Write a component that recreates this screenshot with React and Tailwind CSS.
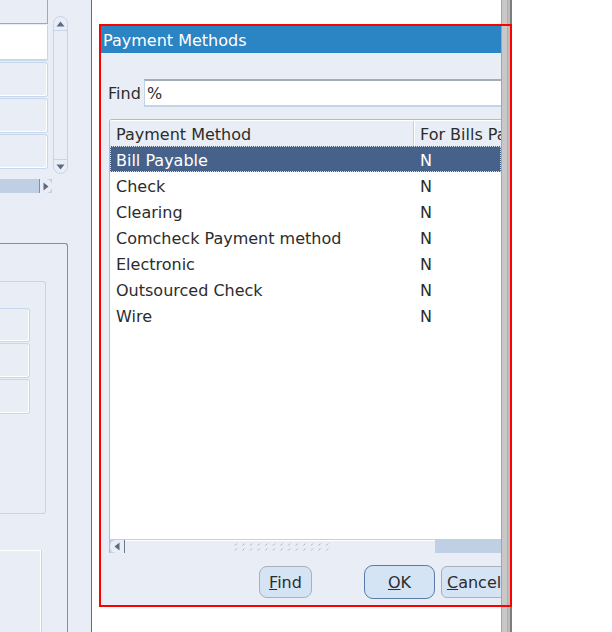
import React from 'react';

const rows = [
  ['Bill Payable', 'N'],
  ['Check', 'N'],
  ['Clearing', 'N'],
  ['Comcheck Payment method', 'N'],
  ['Electronic', 'N'],
  ['Outsourced Check', 'N'],
  ['Wire', 'N'],
];

// small field box used in the background form
const Field = ({ className }) => (
  <div className={`bg-[#e9eef6] border border-l-0 border-[#c8d8ec] rounded-r-[3px] shadow-[inset_-1px_-1px_0_#ffffff] ${className}`} />
);

const LeftPanel = () => (
  <div className="w-[92px] h-full shrink-0 bg-[#e9eef6] border-r border-[#5b6d96] flex flex-col overflow-hidden">
    <div className="flex h-[174px]">
      <div className="w-[48px] flex flex-col">
        <div className="h-[24px] border-b border-r border-[#a8a8a8]" />
        <div className="mt-[1px] h-[36px] bg-white border-r border-b-2 border-[#c8d8ec] rounded-br-[2px]" />
        <Field className="mt-[1px] h-[35px]" />
        <Field className="mt-[1px] h-[35px]" />
        <Field className="mt-[1px] h-[35px]" />
      </div>
      <div className="ml-[5px] mt-[16px] w-[15px] h-[158px] rounded-full border border-[#c4d4ea] flex flex-col">
        <div className="h-[14px] border-b border-[#c4d4ea] flex items-center justify-center">
          <svg width="9" height="6" viewBox="0 0 9 6"><path d="M4.5 0.5 L8.5 5.5 L0.5 5.5 Z" fill="#5e6a80" /></svg>
        </div>
        <div className="flex-1" />
        <div className="h-[14px] border-t border-[#c4d4ea] flex items-center justify-center">
          <svg width="9" height="6" viewBox="0 0 9 6"><path d="M0.5 0.5 L8.5 0.5 L4.5 5.5 Z" fill="#5e6a80" /></svg>
        </div>
      </div>
    </div>
    <div className="mt-[5px] h-[14px] w-[52px] bg-[#c0d0e4] flex justify-end">
      <div className="w-[13px] h-full rounded-r-[6px] bg-[#e9eef6] border-l border-[#8090a8] flex items-center justify-center">
        <svg width="6" height="9" viewBox="0 0 6 9"><path d="M0.5 0.5 L5.5 4.5 L0.5 8.5 Z" fill="#5e6a80" /></svg>
      </div>
    </div>
    <div className="mt-[50px] w-[68px] flex-1 border-t border-r border-[#7890aa] rounded-tr-[3px] flex flex-col">
      <div className="mt-[37px] w-[46px] h-[233px] border border-l-0 border-[#c4d4ea] rounded-r-[3px] flex flex-col">
        <Field className="mt-[26px] w-[30px] h-[34px]" />
        <Field className="mt-[1px] w-[30px] h-[35px]" />
        <Field className="mt-[1px] w-[30px] h-[35px]" />
      </div>
      <div className="mt-[36px] w-[41px] flex-1 border-t border-r border-white shadow-[1px_0_0_#c4d4ea]" />
    </div>
  </div>
);

const GripDots = () => (
  <svg width="100" height="10" viewBox="0 0 100 10">
    {Array.from({ length: 13 }).map((_, i) => (
      <g key={i} stroke="#a8b4c4" strokeWidth="1">
        <path d={`M${i * 7.6 + 1} 3.5 L${i * 7.6 + 3} 1.5`} />
        <path d={`M${i * 7.6 + 1} 8.5 L${i * 7.6 + 3} 6.5`} />
      </g>
    ))}
  </svg>
);

const Dialog = () => (
  <div className="relative z-10 w-[413px] h-[583px] border-2 border-[#ff0000] flex">
    <div className="w-[400px] shrink-0 h-full flex flex-col overflow-hidden">
      <div className="h-[27px] shrink-0 bg-[#2b84c4] text-white pl-[2px] pt-[2px] leading-[25px] text-[16px] whitespace-nowrap">
        Payment Methods
      </div>
      <div className="flex-1 bg-[#e9eef6] flex flex-col">
        <div className="mt-[26px] flex items-center h-[28px]">
          <span className="pl-[7px] w-[43px] shrink-0 text-[16px] text-[#2c2c2c] pt-[2px]">Find</span>
          <div className="flex-1 h-full bg-white border-t-2 border-[#a4acb8] border-b-2 border-b-[#c4d4e6] border-l border-l-[#c4d4e6] pl-[2px] pt-[1px] text-[16px] text-[#2c2c2c] leading-[24px]">
            %
          </div>
        </div>
        <div className="mt-[12px] ml-[8px] h-[434px] border-t border-l border-[#b4bcc8] rounded-tl-[3px] flex flex-col overflow-hidden">
          <div className="h-[26px] shrink-0 flex bg-[#e9eef6] border-t border-white text-[16px] text-[#2c2c2c] whitespace-nowrap">
            <div className="w-[304px] shrink-0 pl-[6px] pt-[2px] leading-[23px] border-r border-[#c8d0dc]">Payment Method</div>
            <div className="shrink-0 pl-[5px] pt-[2px] leading-[23px] border-l border-white">For Bills Payable</div>
          </div>
          <div className="flex-1 bg-white flex flex-col">
            {rows.map(([name, flag], i) => (
              <div
                key={name}
                className={`h-[26px] flex text-[16px] whitespace-nowrap ${i === 0 ? 'bg-[#47628a] text-white border border-dotted border-[#d0d8e4]' : 'text-[#2c2c2c] border border-transparent'}`}
              >
                <div className="w-[304px] shrink-0 pl-[5px] pt-[3px] leading-[21px]">{name}</div>
                <div className="shrink-0 pl-[5px] pt-[3px] leading-[21px]">{flag}</div>
              </div>
            ))}
          </div>
          <div className="h-[14px] shrink-0 flex bg-[#c0d0e4] border-t border-[#c0d0e4]">
            <div className="w-[15px] shrink-0 h-full bg-[#e9eef6] rounded-l-[6px] border-r border-[#6a7890] flex items-center justify-center">
              <svg width="6" height="9" viewBox="0 0 6 9"><path d="M5.5 0.5 L0.5 4.5 L5.5 8.5 Z" fill="#5e6a80" /></svg>
            </div>
            <div className="w-[310px] shrink-0 h-full bg-[#e9eef6] border-t border-white flex items-center justify-center pl-[8px]">
              <GripDots />
            </div>
          </div>
        </div>
        <div className="mt-[12px] pl-[158px] flex items-center text-[16px] text-[#2c2c2c] whitespace-nowrap">
          <div className="w-[53px] h-[32px] shrink-0 rounded-[8px] border border-[#a8b0b8] bg-[#d4e4f4] flex items-center justify-center pt-[1px]">
            <span><u>F</u>ind</span>
          </div>
          <div className="ml-[52px] w-[71px] h-[34px] shrink-0 rounded-[9px] border border-[#5a7aa8] bg-[#d4e4f4] flex items-center justify-center pt-[1px]">
            <span><u>O</u>K</span>
          </div>
          <div className="ml-[6px] w-[80px] h-[32px] shrink-0 rounded-[6px] border border-[#a8b0b8] bg-[#d4e4f4] flex items-center pl-[5px] pt-[1px]">
            <span><u>C</u>ancel</span>
          </div>
        </div>
      </div>
    </div>
    <div className="w-[9px] shrink-0" />
  </div>
);

export default function App() {
  return (
    <div className="relative w-[612px] h-[632px] overflow-hidden bg-white flex" style={{ fontFamily: '"DejaVu Sans", sans-serif' }}>
      <LeftPanel />
      <div className="flex-1 pl-[7px] pt-[24px]">
        <Dialog />
      </div>
      {/* frame edge behind the dialog */}
      <div className="absolute left-[501px] top-0 h-full flex z-0">
        <div className="w-[1px] bg-[#a4a4a4]" />
        <div className="w-[5px] bg-[#c8c8c8]" />
        <div className="w-[1px] bg-[#b0b0b0]" />
        <div className="w-[2px] bg-[#bcbcbc]" />
        <div className="w-[2px] bg-[#7c7c7c]" />
      </div>
    </div>
  );
}
